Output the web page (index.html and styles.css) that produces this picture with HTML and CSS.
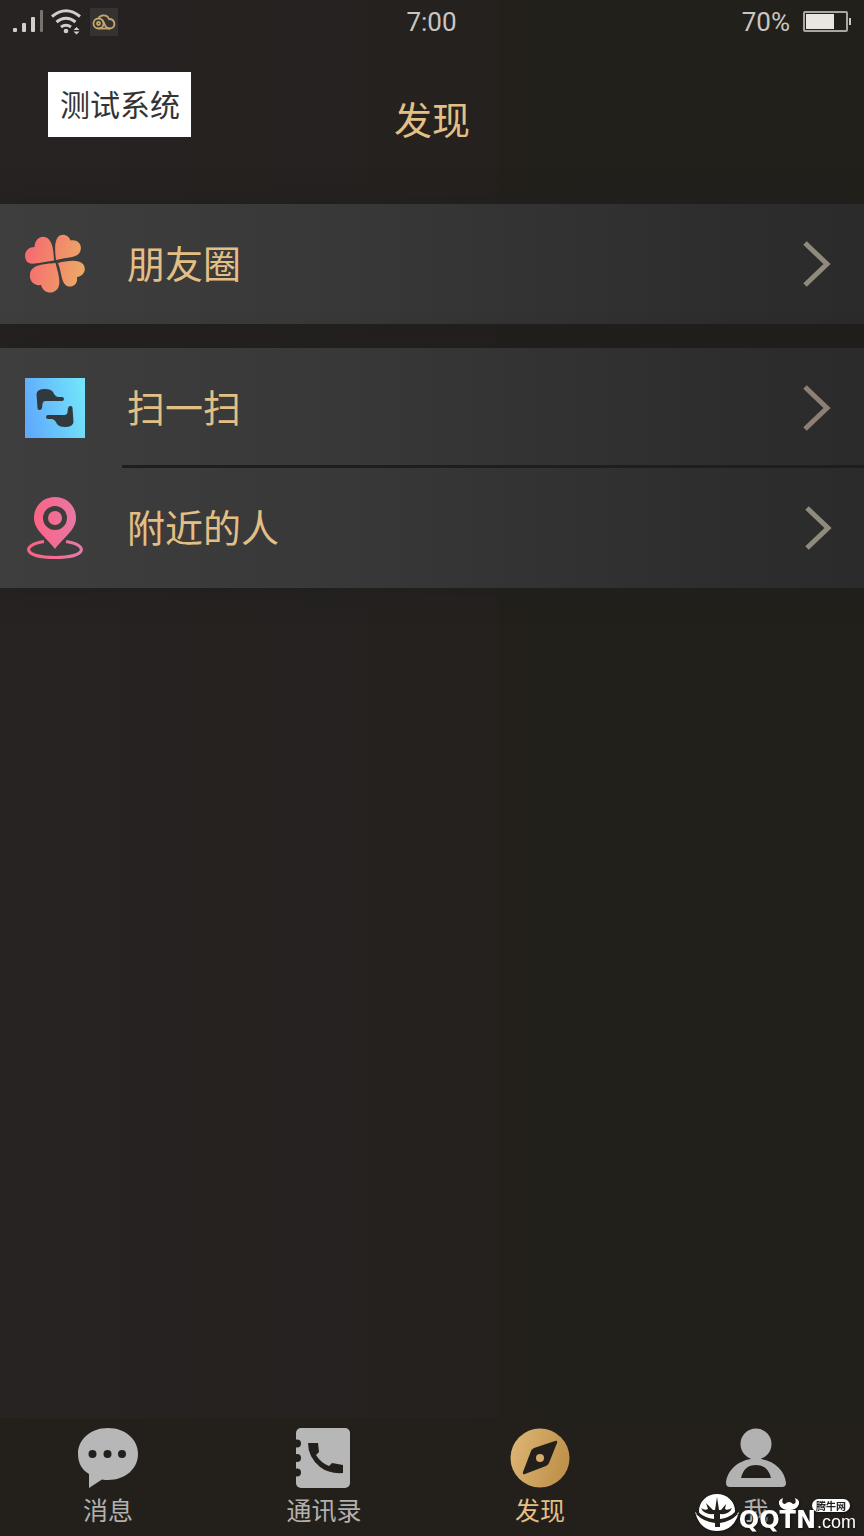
FILE: index.html
```html
<!DOCTYPE html>
<html lang="zh-CN">
<head>
    <meta charset="UTF-8">
    <meta name="viewport" content="width=device-width, initial-scale=1.0">
    <title>发现</title>
    <link rel="stylesheet" href="styles.css">
</head>
<body>
    <div class="status-bar">
        <div class="status-left">
            <svg width="32" height="24" viewBox="0 0 32 24" fill="#d2cfcb">
                <rect x="1" y="18" width="4" height="4" rx="1"/>
                <rect x="10" y="13" width="4" height="9" rx="1"/>
                <rect x="19" y="7" width="4" height="15" rx="1"/>
                <rect x="28" y="0" width="3" height="22" rx="1" fill="#77736f"/>
            </svg>
            <svg width="32" height="26" viewBox="0 0 32 26" fill="none" stroke="#d2cfcb" stroke-width="3">
                <path d="M1 7.5Q15 -4 29 7.5M5.5 13Q15 5.5 24.5 13M10 18Q15 14.5 20 18"/>
                <circle cx="15" cy="22" r="2.3" fill="#d2cfcb" stroke="none"/>
                <path d="M22.5 21L25.500 18L28.5 21ZM22.5 22.5L25.500 25.5L28.5 22.5Z" fill="#d2cfcb" stroke="none"/>
            </svg>
            <svg width="28" height="28" viewBox="0 0 28 28">
                <rect width="28" height="28" fill="#353332"/>
                <g fill="none" stroke="#c5a76c" stroke-width="1.800">
                    <circle cx="8.500" cy="15.500" r="5"/>
                    <circle cx="8.500" cy="15.500" r="1.500"/>
                    <path d="M8.500 10.500C10 6.500 17 6 19 11C26 11 26 20.500 20 20.500C14 20.500 15.500 15 12 12"/>
                    <path d="M8.500 20.500H20"/>
                </g>
            </svg>
        </div>
        <div class="status-time">7:00</div>
        <div class="status-right">
            <span>70%</span>
            <svg width="48" height="22" viewBox="0 0 48 22">
                <rect x="1" y="1" width="43" height="19" rx="1" fill="none" stroke="#aaa7a2" stroke-width="2"/>
                <rect x="3" y="3" width="28" height="15" fill="#e9e6e2"/>
                <rect x="46" y="7" width="2" height="7" fill="#c9c6c2"/>
            </svg>
        </div>
    </div>

    <header class="header">
        <button class="test-btn" type="button">测试系统</button>
        <h1>发现</h1>
    </header>

    <main class="content">
        <div class="list">
            <a class="row" href="#moments">
                <svg class="row-icon" viewBox="0 0 62 62">
                    <defs>
                        <linearGradient id="clover" gradientUnits="userSpaceOnUse" x1="5" y1="20" x2="60" y2="32">
                            <stop offset="0" stop-color="#f56d70"/>
                            <stop offset="1" stop-color="#eda865"/>
                        </linearGradient>
                    </defs>
                    <g fill="url(#clover)">
                        <path d="M30 27.500C29.500 19 29 11 25 6.500C20 1 11 4 10.500 14C2 14 -1 22 2.500 28C6 33.500 16 29 30 27.500Z"/>
                        <path d="M32 27C31 18 30 9 34 4C38 -0.500 45 2 46.500 7.500C54 6 59 12 56 19C53 25 43 24 32 27Z"/>
                        <path d="M34 30C43 28 54 26 59 31C63 36 60 43 53 44C54 51 49 55 43 53C37 50 38 40 34 30Z"/>
                        <path d="M31.500 30C34 40 38 51 33 56.500C28 62 19 60 17 52C10 53 5 48 6 41C7 32 19 31 31.500 30Z"/>
                    </g>
                </svg>
                <span class="row-title">朋友圈</span>
                <svg class="arrow" viewBox="0 0 30 48"><path d="M3 3L25 24L3 45"/></svg>
            </a>
        </div>

        <div class="list">
            <a class="row" href="#scan">
                <svg class="row-icon" viewBox="0 0 62 62">
                    <defs>
                        <linearGradient id="scan" x1="0" y1="0.600" x2="1" y2="0.400">
                            <stop offset="0" stop-color="#60a9fc"/>
                            <stop offset="1" stop-color="#72e4fb"/>
                        </linearGradient>
                    </defs>
                    <rect x="1" y="1" width="60" height="60" fill="url(#scan)"/>
                    <g fill="#2f393e">
                        <path d="M12.500 17Q13 12 21 12Q27 12 29 15Q31 19.500 34 20H38Q40 20 40 22Q40 24 38 24H22Q18.500 24 18.500 27L18 31Q17.500 33 15.500 33Q13.500 33 13.500 31Z"/>
                        <path transform="rotate(180 31 31)" d="M12.500 17Q13 12 21 12Q27 12 29 15Q31 19.500 34 20H38Q40 20 40 22Q40 24 38 24H22Q18.500 24 18.500 27L18 31Q17.500 33 15.500 33Q13.500 33 13.500 31Z"/>
                    </g>
                </svg>
                <span class="row-title">扫一扫</span>
                <svg class="arrow arrow-rose" viewBox="0 0 30 48"><path d="M3 3L25 24L3 45"/></svg>
            </a>
            <a class="row" href="#nearby">
                <svg class="row-icon" viewBox="0 0 62 62">
                    <defs>
                        <linearGradient id="pin" gradientUnits="userSpaceOnUse" x1="8" y1="30" x2="56" y2="30">
                            <stop offset="0" stop-color="#fc6383"/>
                            <stop offset="1" stop-color="#e779a8"/>
                        </linearGradient>
                    </defs>
                    <path d="M20 44.500C-3 48 -1 60.500 31 60.500S65 48 42 44.500" fill="none" stroke="url(#pin)" stroke-width="3"/>
                    <path d="M31 0C19 0 10 9 10 21C10 33 22 40 31 52C40 40 52 33 52 21C52 9 43 0 31 0ZM31 9A12 12 0 1 1 31 33A12 12 0 1 1 31 9Z" fill="url(#pin)" fill-rule="evenodd"/>
                    <circle cx="31" cy="21" r="7" fill="url(#pin)"/>
                </svg>
                <span class="row-title">附近的人</span>
                <svg class="arrow" viewBox="0 0 30 48"><path d="M5 4L26 24L5 44"/></svg>
            </a>
        </div>
    </main>

    <nav class="tab-bar">
        <a class="tab" href="#messages">
            <svg class="tab-icon" viewBox="0 0 60 60">
                <path fill="#b7b7b7" d="M30 0C13 0 0 11 0 26C0 35 4 42 11 46V60L24 51.500Q27 52 30 52C47 52 60 41 60 26S47 0 30 0Z"/>
                <g fill="#23201c"><circle cx="14.500" cy="26" r="4"/><circle cx="29.500" cy="26" r="4"/><circle cx="44" cy="26" r="4"/></g>
            </svg>
            <span>消息</span>
        </a>
        <a class="tab" href="#contacts">
            <svg class="tab-icon" viewBox="0 0 60 60">
                <rect x="2" y="0" width="54" height="60" rx="5" fill="#b7b7b7"/>
                <g fill="#23201c">
                    <circle cx="3" cy="15.500" r="4"/><circle cx="3" cy="30" r="4"/><circle cx="3" cy="44.500" r="4"/>
                    <path d="M14 15H24L25 24L22 27Q27 35 35 38L38 35L49 37V45Q35 46 26 39Q14 29 14 15Z"/>
                </g>
            </svg>
            <span>通讯录</span>
        </a>
        <a class="tab active" href="#discover">
            <svg class="tab-icon" viewBox="0 0 60 60">
                <defs>
                    <linearGradient id="compass" x1="0" y1="0" x2="1" y2="0.300">
                        <stop offset="0" stop-color="#dfb777"/>
                        <stop offset="1" stop-color="#c0934c"/>
                    </linearGradient>
                </defs>
                <circle cx="30" cy="30" r="29.500" fill="url(#compass)"/>
                <path fill="#23201c" d="M45 13Q48 12 47 15L39 35Q38 37 36 38L15 46Q12 47 13 44L21 23Q22 21 24 20Z"/>
                <circle cx="30" cy="30" r="4" fill="#d5ac69"/>
            </svg>
            <span>发现</span>
        </a>
        <a class="tab" href="#me">
            <svg class="tab-icon" viewBox="0 0 60 60">
                <g fill="#b2b2b2">
                    <circle cx="30" cy="16" r="15.500"/>
                    <path fill-rule="evenodd" d="M25 29H35V31C49 33 59 43 60 55Q60 59 56 59H4Q0 59 0 55C1 43 11 33 25 31ZM15 50H45Q42 37 30 37T15 50Z"/>
                </g>
            </svg>
            <span>我</span>
        </a>
        <div class="watermark">
            <svg class="mark-logo" viewBox="0 0 44 38">
                <ellipse cx="22" cy="17" rx="18" ry="17" fill="#fff"/>
                <path d="M0 18Q22 36 44 18Q39 37 22 37T0 18Z" fill="#fff"/>
                <path d="M1 20Q9 28 20 29V33H25V29Q35 28 43 20L40 18Q34 24 25 25V20Q34 21 37 14Q32 17 30 15L31 10L26 16H24L22 3L20 16H18L11 9L13 15Q10 17 6 14Q9 21 19 20V25Q10 24 3 18Z" fill="#23201c"/>
            </svg>
            <div class="mark-name">
                QQTN
                <svg class="mark-horns" viewBox="0 0 20 12"><path fill="#fff" d="M4 0Q-1 2 0 6Q2 12 10 12T20 6Q21 2 16 0Q18 6 14 6Q12 4 10 4T6 6Q2 6 4 0Z"/></svg>
            </div>
            <div class="mark-side">
                <span class="mark-badge">腾牛网</span>
                <span class="mark-com">.com</span>
            </div>
        </div>
    </nav>
</body>
</html>
```

FILE: styles.css
```css
* {
    box-sizing: border-box;
}
body {
    margin: 0;
    min-height: 100vh;
    display: flex;
    flex-direction: column;
    font-family: "Noto Sans CJK SC", sans-serif;
    color: #e4bf85;
    background: linear-gradient(to right, #272322, #25211f 57%, #23201b 58%, #22201b);
}
a {
    color: inherit;
    text-decoration: none;
}
svg {
    display: block;
    flex: none;
}
.status-bar {
    display: grid;
    grid-template-columns: 1fr auto 1fr;
    align-items: center;
    height: 44px;
    padding: 0 13px 0 12px;
    font-family: Roboto, sans-serif;
    font-size: 26px;
    color: #c9c6c2;
}
.status-left {
    display: flex;
    align-items: center;
    gap: 7px;
}
.status-right {
    display: flex;
    align-items: center;
    justify-content: flex-end;
    gap: 13px;
}
.header {
    display: grid;
    grid-template-columns: 1fr auto 1fr;
    align-items: start;
    padding: 28px 48px 40px;
}
.header h1 {
    margin: 0;
    font-size: 38px;
    font-weight: 400;
    line-height: 92px;
}
.test-btn {
    justify-self: start;
    height: 65px;
    padding: 0 11px 4px 12px;
    border: none;
    background: #fff;
    color: #333;
    font-family: inherit;
    font-size: 30px;
    cursor: pointer;
}
.content {
    flex: 1;
    display: flex;
    flex-direction: column;
    gap: 24px;
}
.list {
    background: linear-gradient(to right, #3e3e3e, #383838 40%, #2d2d2d 85%, #2b2b2b);
    box-shadow: 0 0 24px #1f1f1e;
}
.row {
    position: relative;
    display: flex;
    align-items: center;
    height: 120px;
    padding: 0 32px 0 24px;
}
.row + .row::before {
    content: "";
    position: absolute;
    top: -3px;
    left: 122px;
    right: 0;
    height: 3px;
    background: #1e1e1e;
}
.row-icon {
    width: 62px;
    height: 62px;
}
.row-title {
    flex: 1;
    margin-left: 41px;
    padding-bottom: 5px;
    font-size: 38px;
}
.arrow {
    width: 30px;
    height: 48px;
    fill: none;
    stroke: #8f8a7b;
    stroke-width: 5;
}
.arrow-rose {
    stroke: #8d7e76;
}
.tab-bar {
    position: relative;
    display: grid;
    grid-template-columns: repeat(4, 1fr);
    padding: 10px 0;
    background: #23201c;
}
.tab {
    display: flex;
    flex-direction: column;
    align-items: center;
    gap: 4px;
    font-size: 25px;
    line-height: 34px;
    color: #b2b0ad;
}
.tab.active {
    color: #e4bf85;
}
.tab-icon {
    width: 60px;
    height: 60px;
}
.watermark {
    position: absolute;
    right: 8px;
    bottom: 4px;
    display: flex;
    align-items: flex-end;
    color: #fff;
    filter: drop-shadow(1px 1px 1px #111);
}
.mark-logo {
    width: 44px;
    height: 38px;
}
.mark-name {
    position: relative;
    font-family: "DejaVu Sans", sans-serif;
    font-size: 24px;
    font-weight: 700;
    line-height: 24px;
}
.mark-horns {
    position: absolute;
    top: -10px;
    left: 40px;
    width: 20px;
    height: 12px;
}
.mark-side {
    display: flex;
    flex-direction: column;
    align-items: flex-end;
    margin-left: -4px;
}
.mark-badge {
    margin-right: 6px;
    padding: 0 4px;
    border-radius: 7px;
    background: #fff;
    color: #222;
    font-size: 10px;
    font-weight: 700;
    line-height: 13px;
}
.mark-com {
    font-family: "Liberation Sans", sans-serif;
    font-size: 18px;
    line-height: 20px;
}
```
